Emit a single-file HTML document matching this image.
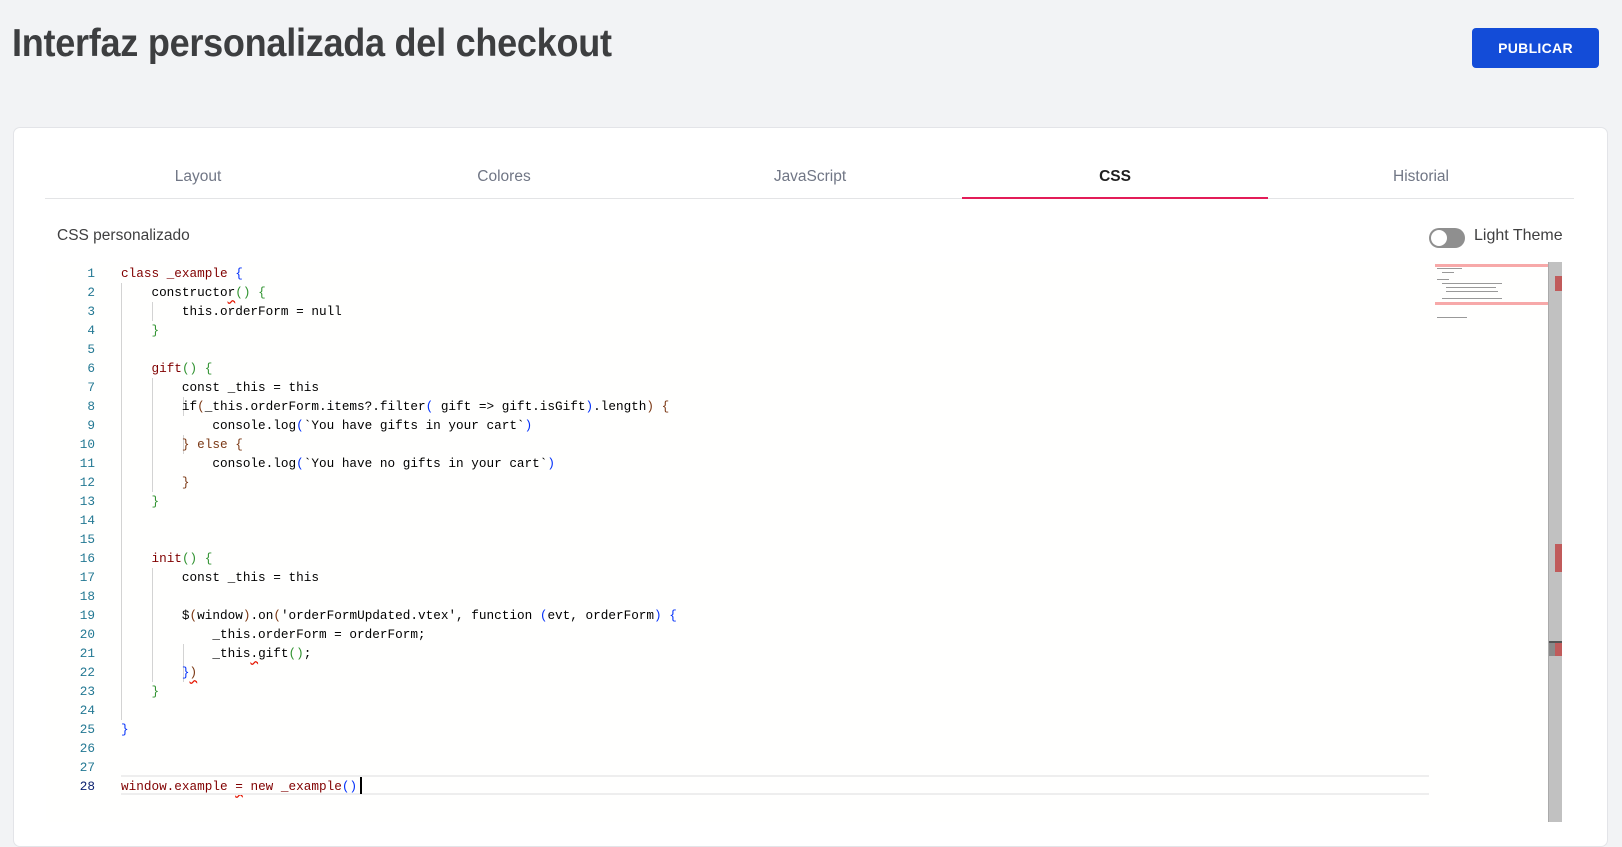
<!DOCTYPE html>
<html><head><meta charset="utf-8"><style>
*{margin:0;padding:0;box-sizing:border-box}
body{width:1622px;height:813px;background:#f2f3f5;font-family:"Liberation Sans",sans-serif;position:relative;overflow:hidden}
.title{position:absolute;left:12px;top:22px;font-size:39px;font-weight:bold;color:#3d3e40;white-space:nowrap;transform-origin:0 0;transform:scaleX(0.925);letter-spacing:-0.3px}
.btn{position:absolute;left:1472px;top:28px;width:127px;height:40px;background:#134cd8;border-radius:4px;color:#fff;font-weight:bold;font-size:14px;text-align:center;line-height:40px;letter-spacing:0.3px}
.card{position:absolute;left:13px;top:127px;width:1595px;height:720px;background:#fff;border:1px solid #e3e4e8;border-radius:7px}
.tabs{position:absolute;left:45px;top:156px;width:1529px;height:43px;border-bottom:1px solid #e3e4e6}
.tab{position:absolute;top:0;width:306px;text-align:center;font-size:15.5px;color:#707685;line-height:42px}
.tab.act{color:#1f1f1f;font-weight:bold;border-bottom:2px solid #e31c58;height:43px}
.lbl{position:absolute;left:57px;top:227px;font-size:15.5px;color:#3f3f40}
.tog{position:absolute;left:1429px;top:228px;width:36px;height:20px;border-radius:10px;background:#8f8f8f}
.tog:after{content:"";position:absolute;left:2px;top:2px;width:16px;height:16px;border-radius:50%;background:#fff}
.lt{position:absolute;left:1474px;top:227px;font-size:16px;color:#3f3f40}
.ed{position:absolute;left:46px;top:262px;width:1502px;height:560px;background:#fffffe}
.ln{position:absolute;left:0;width:49px;text-align:right;font-family:"Liberation Mono",monospace;font-size:12.7px;color:#237893;line-height:19px}
.cd{position:absolute;left:75px;font-family:"Liberation Mono",monospace;font-size:12.7px;color:#000;line-height:19px;white-space:pre}
.g{position:absolute;width:1px;background:#d3d3d3}
.m{color:#800000}.b1{color:#0431fa}.b2{color:#319331}.b3{color:#7b3814}
.sq{text-decoration:underline wavy #e51400;text-underline-offset:3px}
.cur{position:absolute;left:121px;top:775px;width:1308px;height:20px;border-top:2px solid #eee;border-bottom:2px solid #eee}
.sb{position:absolute;left:1548px;top:262px;width:14px;height:560px;background:#c1c1c1;border-left:1px solid #aaa}
.mk{position:absolute;left:1555px;width:7px;background:#c05b5b}
.mm{position:absolute;height:1px;background:#999;left:1437px}
</style></head><body>
<div class="title">Interfaz personalizada del checkout</div>
<div class="btn">PUBLICAR</div>
<div class="card"></div>
<div class="tabs">
<div class="tab" style="left:0">Layout</div>
<div class="tab" style="left:306px">Colores</div>
<div class="tab" style="left:612px">JavaScript</div>
<div class="tab act" style="left:917px">CSS</div>
<div class="tab" style="left:1223px">Historial</div>
</div>
<div class="lbl">CSS personalizado</div>
<div class="tog"></div>
<div class="lt">Light Theme</div>
<div class="ed">
<div class="ln" style="top:2px">1<br>2<br>3<br>4<br>5<br>6<br>7<br>8<br>9<br>10<br>11<br>12<br>13<br>14<br>15<br>16<br>17<br>18<br>19<br>20<br>21<br>22<br>23<br>24<br>25<br>26<br>27<br><span style="color:#0b216f">28</span></div>
<div class="g" style="left:75px;top:21px;height:437px"></div>
<div class="g" style="left:106px;top:40px;height:19px"></div>
<div class="g" style="left:106px;top:116px;height:114px"></div>
<div class="g" style="left:106px;top:306px;height:114px"></div>
<div class="g" style="left:137px;top:135px;height:19px"></div>
<div class="g" style="left:137px;top:173px;height:19px"></div>
<div class="g" style="left:137px;top:382px;height:38px"></div>
<div class="cd" style="top:2px"><span class="m">class _example</span> <span class="b1">{</span>
    constructo<span class="sq">r</span><span class="b2">()</span> <span class="b2">{</span>
        this.orderForm = null
    <span class="b2">}</span>

    <span class="m">gift</span><span class="b2">()</span> <span class="b2">{</span>
        const _this = this
        if<span class="b3">(</span>_this.orderForm.items?.filter<span class="b1">(</span> gift =&gt; gift.isGift<span class="b1">)</span>.length<span class="b3">)</span> <span class="b3">{</span>
            console.log<span class="b1">(</span>`You have gifts in your cart`<span class="b1">)</span>
        <span class="b3">} else {</span>
            console.log<span class="b1">(</span>`You have no gifts in your cart`<span class="b1">)</span>
        <span class="b3">}</span>
    <span class="b2">}</span>


    <span class="m">init</span><span class="b2">()</span> <span class="b2">{</span>
        const _this = this

        $<span class="b3">(</span>window<span class="b3">)</span>.on<span class="b3">(</span>'orderFormUpdated.vtex', function <span class="b1">(</span>evt, orderForm<span class="b1">)</span> <span class="b1">{</span>
            _this.orderForm = orderForm;
            _this<span class="sq">.</span>gift<span class="b2">()</span>;
        <span class="b1">}</span><span class="b3 sq">)</span>
    <span class="b2">}</span>

<span class="b1">}</span>


<span class="m">window.example <span class="sq">=</span> new _example</span><span class="b1">()</span></div>
</div>
<div class="cur"></div>
<div style="position:absolute;left:360px;top:777px;width:2px;height:17px;background:#000"></div>
<div style="position:absolute;left:1435px;top:264px;width:113px;height:3px;background:#f7a9a9"></div>
<div style="position:absolute;left:1435px;top:302px;width:113px;height:3px;background:#f7a9a9"></div>
<div class="mm" style="top:268px;width:25px"></div>
<div class="mm" style="top:272px;width:12px;left:1442px"></div>
<div class="mm" style="top:279px;width:12px"></div>
<div class="mm" style="top:283px;width:60px;left:1442px"></div>
<div class="mm" style="top:287px;width:50px;left:1446px"></div>
<div class="mm" style="top:291px;width:52px;left:1446px"></div>
<div class="mm" style="top:298px;width:60px;left:1442px"></div>
<div class="mm" style="top:317px;width:30px"></div>
<div class="sb"></div>
<div class="mk" style="top:276px;height:15px"></div>
<div class="mk" style="top:544px;height:28px"></div>
<div style="position:absolute;left:1549px;top:641px;width:13px;height:2px;background:#555"></div>
<div style="position:absolute;left:1549px;top:643px;width:6px;height:13px;background:#8a8a8a"></div>
<div class="mk" style="top:643px;height:13px"></div>
</body></html>
